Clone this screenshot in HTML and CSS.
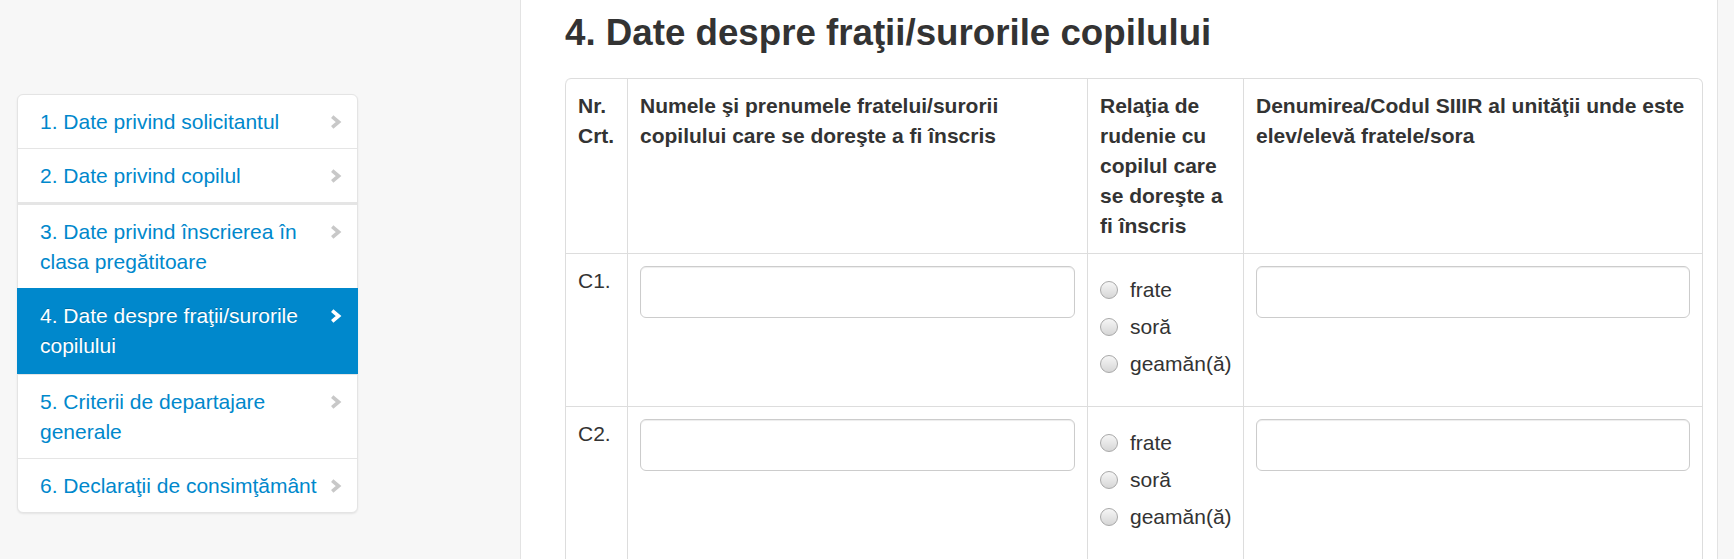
FILE: index.html
```
<!DOCTYPE html>
<html>
    <head>
        <title>Înscriere - Date despre fraţii/surorile copilului</title>
        <meta charset="utf-8">
        <link rel="stylesheet" href="styles.css">
    </head>
    <body>
        <div class="page">
            <aside class="sidebar">
                <ul class="steps">
                    <li class="step"><a class="step-link">1. Date privind solicitantul</a><svg class="chev" viewBox="0 0 12 14"><path d="M2.2 1.6 L8.6 7 L2.2 12.4"/></svg></li>
                    <li class="step"><a class="step-link">2. Date privind copilul</a><svg class="chev" viewBox="0 0 12 14"><path d="M2.2 1.6 L8.6 7 L2.2 12.4"/></svg></li>
                    <li class="step step-thick"><a class="step-link">3. Date privind înscrierea în clasa pregătitoare</a><svg class="chev" viewBox="0 0 12 14"><path d="M2.2 1.6 L8.6 7 L2.2 12.4"/></svg></li>
                    <li class="step active"><a class="step-link">4. Date despre fraţii/surorile copilului</a><svg class="chev" viewBox="0 0 12 14"><path d="M2.2 1.6 L8.6 7 L2.2 12.4"/></svg></li>
                    <li class="step"><a class="step-link">5. Criterii de departajare generale</a><svg class="chev" viewBox="0 0 12 14"><path d="M2.2 1.6 L8.6 7 L2.2 12.4"/></svg></li>
                    <li class="step"><a class="step-link">6. Declaraţii de consimţământ</a><svg class="chev" viewBox="0 0 12 14"><path d="M2.2 1.6 L8.6 7 L2.2 12.4"/></svg></li>
                </ul>
            </aside>
            <main class="content">
                <h3 class="title">4. Date despre fraţii/surorile copilului</h3>
                <table class="siblings">
                    <colgroup>
                        <col class="c-nr">
                        <col class="c-name">
                        <col class="c-rel">
                        <col class="c-school">
                    </colgroup>
                    <thead>
                        <tr>
                            <th>Nr. Crt.</th>
                            <th>Numele şi prenumele fratelui/surorii copilului care se doreşte a fi înscris</th>
                            <th>Relaţia de rudenie cu copilul care se doreşte a fi înscris</th>
                            <th>Denumirea/Codul SIIIR al unităţii unde este elev/elevă fratele/sora</th>
                        </tr>
                    </thead>
                    <tbody>
                        <tr>
                            <td>C1.</td>
                            <td><input class="field" type="text"></td>
                            <td>
                                <div class="radios">
                                    <label class="radio"><input type="radio" name="rel1"><span>frate</span></label>
                                    <label class="radio"><input type="radio" name="rel1"><span>soră</span></label>
                                    <label class="radio"><input type="radio" name="rel1"><span>geamăn(ă)</span></label>
                                </div>
                            </td>
                            <td><input class="field" type="text"></td>
                        </tr>
                        <tr>
                            <td>C2.</td>
                            <td><input class="field" type="text"></td>
                            <td>
                                <div class="radios">
                                    <label class="radio"><input type="radio" name="rel2"><span>frate</span></label>
                                    <label class="radio"><input type="radio" name="rel2"><span>soră</span></label>
                                    <label class="radio"><input type="radio" name="rel2"><span>geamăn(ă)</span></label>
                                </div>
                            </td>
                            <td><input class="field" type="text"></td>
                        </tr>
                    </tbody>
                </table>
            </main>
        </div>
    </body>
</html>
```

FILE: styles.css
```
html, body {
    margin: 0;
    height: 100%;
    background-color: #f7f7f7;
}
body {
    font-family: "Liberation Sans", Arial, sans-serif;
    font-size: 21px;
    line-height: 30px;
    color: #333333;
    overflow: hidden;
}
.page {
    display: flex;
    height: 100%;
}
.sidebar {
    flex: 0 0 520px;
    border-right: 1px solid #e3e3e3;
    padding-top: 94px;
}
.steps {
    list-style: none;
    margin: 0 0 0 17px;
    padding: 0;
    width: 341px;
    box-sizing: border-box;
    background: #ffffff;
    border: 1px solid #e4e4e4;
    border-radius: 6px;
    box-shadow: 0 1px 2px rgba(0, 0, 0, 0.08);
}
.step {
    display: flex;
    align-items: flex-start;
    padding: 12px 15px 11px 22px;
    border-top: 1px solid #e5e5e5;
}
.step:first-child {
    border-top: 0;
    border-radius: 6px 6px 0 0;
}
.step:last-child {
    border-radius: 0 0 6px 6px;
}
.step-thick {
    border-top: 3px solid #e5e5e5;
}
.step-link {
    flex: 1;
    color: #0088cc;
    cursor: pointer;
}
.chev {
    flex: 0 0 12px;
    width: 12px;
    height: 14px;
    margin: 8px 0 0 4px;
}
.chev path {
    fill: none;
    stroke: #c8c8c8;
    stroke-width: 3.6;
}
.step.active {
    background: #0088cc;
    margin: 0 -1px;
    padding-left: 23px;
    padding-right: 16px;
    padding-bottom: 13px;
    border-top-color: #0088cc;
}
.step.active .step-link {
    color: #ffffff;
    text-shadow: 0 -1px 0 rgba(0, 0, 0, 0.2);
}
.step.active .chev path {
    stroke: #ffffff;
}
.content {
    flex: 0 0 1197px;
    background: #ffffff;
    border-right: 1px solid #e3e3e3;
    padding: 0 0 0 44px;
    box-sizing: border-box;
}
.title {
    margin: 13px 0 25px;
    font-size: 36.7px;
    line-height: 40px;
    font-weight: bold;
    color: #333333;
}
.siblings {
    width: 1138px;
    table-layout: fixed;
    border-collapse: separate;
    border-spacing: 0;
    border: 1px solid #dddddd;
    border-left: 0;
    border-radius: 6px;
    font-size: inherit;
    line-height: inherit;
}
.c-nr { width: 62px; }
.c-name { width: 460px; }
.c-rel { width: 156px; }
.c-school { width: 459px; }
.siblings th,
.siblings td {
    padding: 12px;
    text-align: left;
    vertical-align: top;
    border-top: 1px solid #dddddd;
    border-left: 1px solid #dddddd;
}
.siblings thead th {
    border-top: 0;
    font-weight: bold;
}
.siblings thead th:first-child {
    border-top-left-radius: 6px;
}
.field {
    display: block;
    width: 100%;
    height: 52px;
    box-sizing: border-box;
    margin: 0;
    padding: 6px 9px;
    font: inherit;
    border: 1px solid #cccccc;
    border-radius: 6px;
    box-shadow: inset 0 1px 1px rgba(0, 0, 0, 0.075);
    background: #ffffff;
}
.radios {
    display: flex;
    flex-direction: column;
    gap: 7px;
    padding: 9px 0 15px;
}
.siblings tbody tr:last-child .radios {
    padding-bottom: 20px;
}
.radio {
    display: flex;
    align-items: center;
    white-space: nowrap;
}
.radio input {
    appearance: none;
    -webkit-appearance: none;
    width: 18px;
    height: 18px;
    margin: 0 12px 0 0;
    border-radius: 50%;
    border: 1px solid #a8a8a8;
    background: linear-gradient(#f6f6f6, #d6d6d6);
    box-sizing: border-box;
    flex: 0 0 18px;
}
```
